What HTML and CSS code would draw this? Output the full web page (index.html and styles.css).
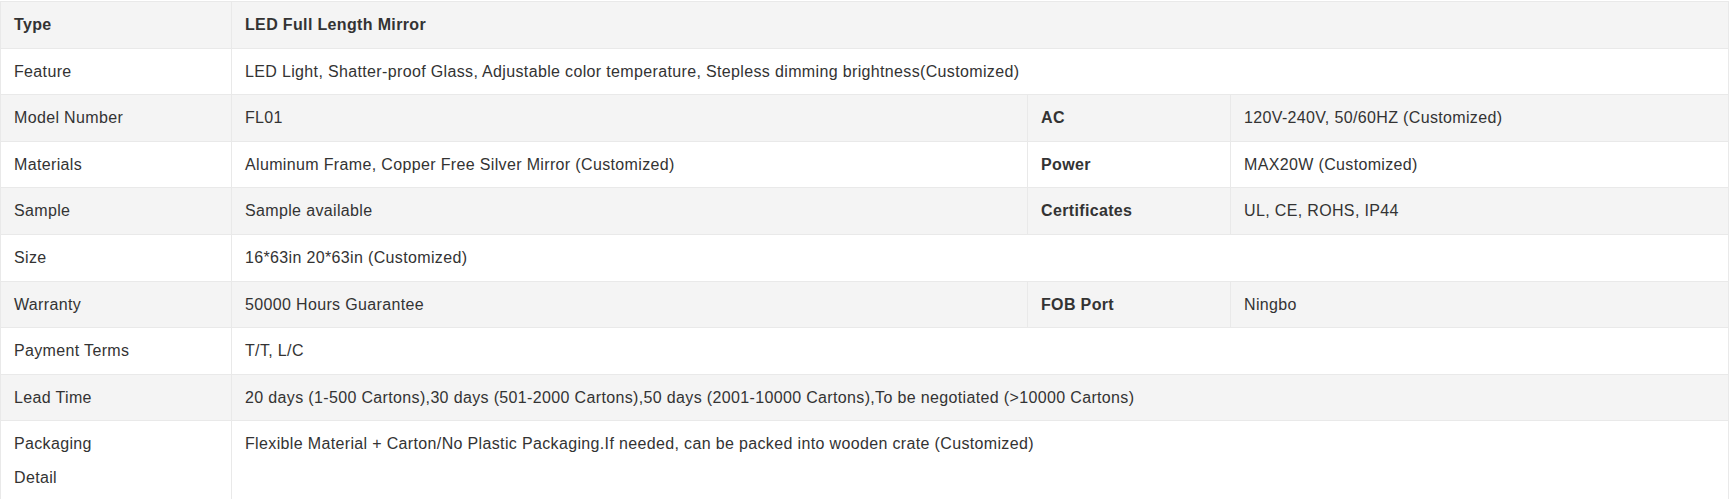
FILE: index.html
```html
<!DOCTYPE html>
<html>
<head>
<meta charset="utf-8">
<link rel="stylesheet" href="styles.css">
</head>
<body>
<table class="spec">
  <colgroup>
    <col class="c1">
    <col class="c2">
    <col class="c3">
    <col class="c4">
  </colgroup>
  <tbody>
    <tr class="grey"><td class="b">Type</td><td class="b" colspan="3">LED Full Length Mirror</td></tr>
    <tr><td>Feature</td><td colspan="3">LED Light, Shatter-proof Glass, Adjustable color temperature, Stepless dimming brightness(Customized)</td></tr>
    <tr class="grey"><td>Model Number</td><td>FL01</td><td class="b">AC</td><td>120V-240V, 50/60HZ (Customized)</td></tr>
    <tr><td>Materials</td><td>Aluminum Frame, Copper Free Silver Mirror (Customized)</td><td class="b">Power</td><td>MAX20W (Customized)</td></tr>
    <tr class="grey"><td>Sample</td><td>Sample available</td><td class="b">Certificates</td><td>UL, CE, ROHS, IP44</td></tr>
    <tr><td>Size</td><td colspan="3">16*63in 20*63in (Customized)</td></tr>
    <tr class="grey"><td>Warranty</td><td>50000 Hours Guarantee</td><td class="b">FOB Port</td><td>Ningbo</td></tr>
    <tr><td>Payment Terms</td><td colspan="3">T/T, L/C</td></tr>
    <tr class="grey"><td>Lead Time</td><td colspan="3">20 days (1-500 Cartons),30 days (501-2000 Cartons),50 days (2001-10000 Cartons),To be negotiated (&gt;10000 Cartons)</td></tr>
    <tr><td>Packaging<br>Detail</td><td colspan="3">Flexible Material + Carton/No Plastic Packaging.If needed, can be packed into wooden crate (Customized)</td></tr>
  </tbody>
</table>
</body>
</html>
```

FILE: styles.css
```css
html, body {
  margin: 0;
  padding: 0;
  background: #fff;
}
body {
  padding-top: 1px;
  font-family: "Liberation Sans", Arial, sans-serif;
  font-size: 16px;
  letter-spacing: 0.35px;
  color: #333;
}
.spec {
  width: 1728px;
  border-collapse: collapse;
  table-layout: fixed;
  border: 1px solid #e9e9e9;
}
.c1 { width: 231px; }
.c2 { width: 796px; }
.c3 { width: 203px; }
.c4 { width: 498px; }
.spec td {
  border: 1px solid #e9e9e9;
  padding: 6px 13px;
  line-height: 33.6px;
  vertical-align: top;
  text-align: left;
}
.spec tr.grey td {
  background: #f4f4f4;
}
.spec td.b {
  font-weight: bold;
}
```
